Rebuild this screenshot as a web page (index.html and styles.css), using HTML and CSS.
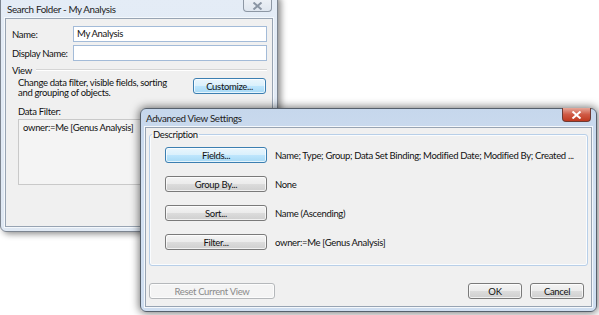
FILE: index.html
```html
<!DOCTYPE html>
<html lang="en">
<head>
  <meta charset="UTF-8">
  <title>Search Folder - My Analysis</title>
  <link rel="stylesheet" href="styles.css">
</head>
<body>
  <div class="desktop">
    <!-- 後ろのウィンドウ -->
    <div class="window win-search inactive">
      <div class="titlebar">
        <span class="title">Search Folder - My Analysis</span>
        <span class="close-btn"><svg width="11" height="8" viewBox="0 0 11 8"><path d="M1.5 0.5 L9.5 7.5 M9.5 0.5 L1.5 7.5" stroke="#8b96a4" stroke-width="2"/></svg></span>
      </div>
      <div class="client">
        <div class="form-row">
          <label class="form-label">Name:</label>
          <div class="text-input">My Analysis</div>
        </div>
        <div class="form-row">
          <label class="form-label">Display Name:</label>
          <div class="text-input"></div>
        </div>
        <div class="section-head"><span>View</span><span class="rule"></span></div>
        <div class="view-row">
          <p class="view-text">Change data filter, visible fields, sorting<br>and grouping of objects.</p>
          <button class="btn btn-blue btn-customize">Customize...</button>
        </div>
        <div class="filter-label">Data Filter:</div>
        <div class="filter-box">owner:=Me [Genus Analysis]</div>
      </div>
    </div>

    <!-- 前のウィンドウ -->
    <div class="window win-advanced">
      <div class="titlebar">
        <span class="title">Advanced View Settings</span>
        <span class="close-btn"><svg width="11" height="8" viewBox="0 0 11 8"><path d="M1.5 0.5 L9.5 7.5 M9.5 0.5 L1.5 7.5" stroke="#fff" stroke-width="2"/></svg></span>
      </div>
      <div class="client">
        <fieldset class="group">
          <legend>Description</legend>
          <div class="group-body">
            <div class="setting-row">
              <button class="btn btn-blue btn-setting">Fields...</button>
              <span class="setting-value">Name; Type; Group; Data Set Binding; Modified Date; Modified By; Created ...</span>
            </div>
            <div class="setting-row">
              <button class="btn btn-setting">Group By...</button>
              <span class="setting-value">None</span>
            </div>
            <div class="setting-row">
              <button class="btn btn-setting">Sort...</button>
              <span class="setting-value">Name (Ascending)</span>
            </div>
            <div class="setting-row">
              <button class="btn btn-setting">Filter...</button>
              <span class="setting-value">owner:=Me [Genus Analysis]</span>
            </div>
          </div>
        </fieldset>
        <div class="footer">
          <button class="btn btn-reset" disabled>Reset Current View</button>
          <span class="spacer"></span>
          <button class="btn btn-dialog">OK</button>
          <button class="btn btn-dialog">Cancel</button>
        </div>
      </div>
    </div>
  </div>
</body>
</html>
```

FILE: styles.css
```css
html, body {
  margin: 0;
  padding: 0;
  background: #ffffff;
  overflow: hidden;
}

* {
  box-sizing: border-box;
}

body {
  font-family: Lato, "Open Sans", sans-serif;
  font-size: 9.5px;
  line-height: 13px;
  letter-spacing: -0.32px;
  color: #111;
}

.desktop {
  position: relative;
  width: 599px;
  height: 315px;
  overflow: hidden;
}

/* ウィンドウ枠 */
.window {
  position: absolute;
  display: flex;
  flex-direction: column;
  border: 1px solid #56606c;
  border-radius: 6px;
  background: linear-gradient(#c6d7ec, #d3e1f2 40%, #cfdef0);
  padding: 0 4px 4px;
}

.window.inactive {
  background: linear-gradient(#e4ecf6, #dfe8f3);
  border-color: #7d8590;
}

.win-search {
  left: 0;
  top: -6px;
  width: 278px;
  height: 238px;
  box-shadow: 3px 2px 6px rgba(0, 0, 0, 0.45);
}

.win-advanced {
  left: 140px;
  top: 108px;
  width: 457px;
  height: 204px;
  box-shadow: 0 0 8px 1px rgba(0, 0, 0, 0.55);
}

.titlebar {
  position: relative;
  display: flex;
  align-items: center;
  flex-shrink: 0;
}

.win-search .titlebar {
  height: 23px;
  padding: 6px 0 0 2px;
}

.win-advanced .titlebar {
  height: 18px;
  padding: 0 0 0 1px;
}

.title {
  font-size: 9.8px;
  letter-spacing: -0.35px;
  color: #222;
}

.close-btn {
  position: absolute;
  right: 1px;
  top: -1px;
  width: 29px;
  display: flex;
  align-items: center;
  justify-content: center;
  border: 1px solid #8d97a4;
  border-top: none;
  border-radius: 0 0 4px 4px;
}

.win-search .close-btn {
  height: 18px;
  padding-top: 6px;
  background: linear-gradient(#f2f5f9, #dfe6ef);
}

.win-advanced .close-btn {
  height: 14px;
  border-color: #6e3a33;
  background: linear-gradient(#e6a799, #cf5a45 50%, #c0391f);
}

.client {
  flex: 1;
  background: #f0f0f0;
  border: 1px solid #98a4b3;
  box-shadow: 0 0 0 1px #f4f8fc;
  display: flex;
  flex-direction: column;
}

/* 検索フォルダー */
.win-search .client {
  padding: 7px 5px 0 6px;
}

.form-row {
  display: flex;
  align-items: center;
  height: 16px;
  margin-bottom: 3px;
}

.form-label {
  width: 61px;
  flex-shrink: 0;
  white-space: nowrap;
}

.text-input {
  flex: 1;
  height: 16px;
  background: #fff;
  border: 1px solid #a3bbd8;
  padding: 0 3px;
  line-height: 14px;
}

.section-head {
  display: flex;
  align-items: center;
  height: 12px;
}

.section-head .rule {
  flex: 1;
  height: 2px;
  background: #d5d5d5;
  border-bottom: 1px solid #fff;
  margin-left: 4px;
}

.view-row {
  display: flex;
  align-items: flex-start;
  padding-left: 6px;
  margin-top: 2px;
}

.view-text {
  margin: 0;
  flex: 1;
  line-height: 10px;
}

.btn {
  font-family: inherit;
  font-size: 9.5px;
  letter-spacing: inherit;
  color: #111;
  height: 16px;
  padding: 0;
  flex-shrink: 0;
  border: 1px solid #7a7a7a;
  border-radius: 3px;
  background: linear-gradient(#f4f4f4, #ebebeb 50%, #dcdcdc 51%, #cfcfcf);
  box-shadow: inset 0 0 0 1px rgba(255, 255, 255, 0.7);
}

.btn-blue {
  border-color: #3c7fb1;
  background: linear-gradient(#eaf6fd, #d9f0fc 50%, #bee6fd 51%, #a7d9f5);
}

.btn-customize {
  width: 73px;
  margin-right: 1px;
}

.filter-label {
  padding-left: 6px;
  margin-top: 7px;
}

.filter-box {
  margin: 1px 0 0 6px;
  height: 66px;
  border: 1px solid #c9c9c9;
  background: #f4f4f4;
  padding: 1px 4px;
}

/* 詳細ビュー設定 */
.win-advanced .client {
  padding: 0 3px;
}

.group {
  margin: 0;
  padding: 0;
  border: 1px solid #b8cfe8;
  border-radius: 3px;
  box-shadow: inset 0 0 0 1px #fafcfe;
  min-width: 0;
}

.group legend {
  padding: 0 1px;
  margin-left: 2px;
}

.group-body {
  padding: 6px 0 15px 15px;
}

.setting-row {
  display: flex;
  align-items: center;
  height: 16px;
  margin-bottom: 13px;
}

.setting-row:last-child {
  margin-bottom: 0;
}

.btn-setting {
  width: 102px;
}

.setting-value {
  margin-left: 8px;
  white-space: nowrap;
}

.footer {
  display: flex;
  align-items: center;
  margin-top: 17px;
  padding: 0 4px 0 0;
}

.spacer {
  flex: 1;
}

.btn-reset {
  width: 126px;
  color: #8a8a8a;
  border-color: #b5b8bb;
  background: #f4f4f4;
}

.btn-dialog {
  width: 54px;
  margin-left: 8px;
}
```
